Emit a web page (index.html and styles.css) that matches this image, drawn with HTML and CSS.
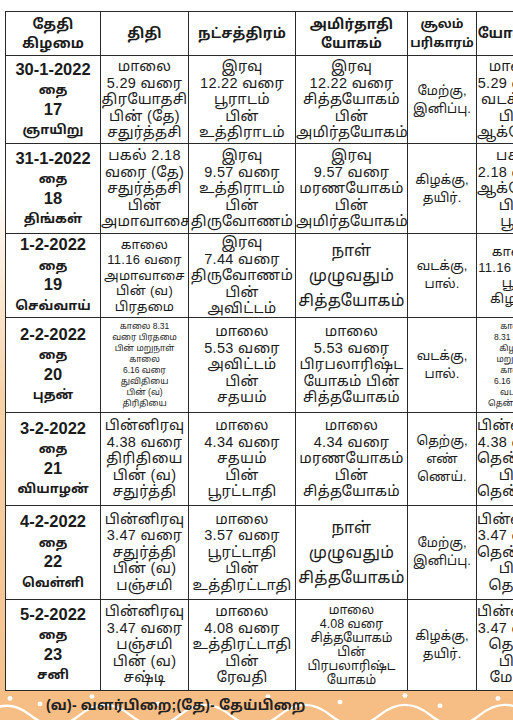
FILE: index.html
```html
<!DOCTYPE html>
<html lang="ta">
<head>
<meta charset="utf-8">
<link rel="stylesheet" href="styles.css">
</head>
<body>
<div class="page">
  <table class="cal">
    <colgroup>
      <col class="c1"><col class="c2"><col class="c3"><col class="c4"><col class="c5"><col class="c6">
    </colgroup>
    <tr class="head">
      <th>தேதி<br>கிழமை</th>
      <th>திதி</th>
      <th>நட்சத்திரம்</th>
      <th>அமிர்தாதி<br>யோகம்</th>
      <th class="narrow">சூலம்<br>பரிகாரம்</th>
      <th>யோகினி</th>
    </tr>
    <tr class="r1">
      <td class="date"><b class="big">30-1-2022</b><br>தை<br><b class="big">17</b><br>ஞாயிறு</td>
      <td>மாலை<br>5.29 வரை<br>திரயோதசி<br>பின் (தே)<br>சதுர்த்தசி</td>
      <td>இரவு<br>12.22 வரை<br>பூராடம்<br>பின்<br>உத்திராடம்</td>
      <td>இரவு<br>12.22 வரை<br>சித்தயோகம்<br>பின்<br>அமிர்தயோகம்</td>
      <td class="dir">மேற்கு,<br>இனிப்பு.</td>
      <td>மாலை<br>5.29 வரை<br>வடக்கில்<br>பின்<br>ஆக்னேயம்</td>
    </tr>
    <tr class="r2">
      <td class="date"><b class="big">31-1-2022</b><br>தை<br><b class="big">18</b><br>திங்கள்</td>
      <td>பகல் 2.18<br>வரை (தே)<br>சதுர்த்தசி<br>பின்<br>அமாவாசை</td>
      <td>இரவு<br>9.57 வரை<br>உத்திராடம்<br>பின்<br>திருவோணம்</td>
      <td>இரவு<br>9.57 வரை<br>மரணயோகம்<br>பின்<br>அமிர்தயோகம்</td>
      <td class="dir">கிழக்கு,<br>தயிர்.</td>
      <td>பகல்<br>2.18 வரை<br>ஆக்னேயம்<br>பின்<br>பூமி</td>
    </tr>
    <tr class="r3">
      <td class="date"><b class="big">1-2-2022</b><br>தை<br><b class="big">19</b><br>செவ்வாய்</td>
      <td class="sm">காலை<br>11.16 வரை<br>அமாவாசை<br>பின் (வ)<br>பிரதமை</td>
      <td>இரவு<br>7.44 வரை<br>திருவோணம்<br>பின்<br>அவிட்டம்</td>
      <td class="lg">நாள்<br>முழுவதும்<br>சித்தயோகம்</td>
      <td class="dir">வடக்கு,<br>பால்.</td>
      <td class="sm">காலை<br>11.16 வரை<br>பூமி<br>கிழக்கு</td>
    </tr>
    <tr class="r4">
      <td class="date"><b class="big">2-2-2022</b><br>தை<br><b class="big">20</b><br>புதன்</td>
      <td class="xs">காலை 8.31<br>வரை பிரதமை<br>பின் மறுநாள்<br>காலை<br>6.16 வரை<br>துவிதியை<br>பின் (வ)<br>திரிதியை</td>
      <td>மாலை<br>5.53 வரை<br>அவிட்டம்<br>பின்<br>சதயம்</td>
      <td>மாலை<br>5.53 வரை<br>பிரபலாரிஷ்ட<br>யோகம் பின்<br>சித்தயோகம்</td>
      <td class="dir">வடக்கு,<br>பால்.</td>
      <td class="xs">காலை<br>8.31 வரை<br>கிழக்கு<br>மறுநாள்<br>காலை<br>6.16 வரை<br>வடக்கு<br>தென்மேற்கு</td>
    </tr>
    <tr class="r5">
      <td class="date"><b class="big">3-2-2022</b><br>தை<br><b class="big">21</b><br>வியாழன்</td>
      <td>பின்னிரவு<br>4.38 வரை<br>திரிதியை<br>பின் (வ)<br>சதுர்த்தி</td>
      <td>மாலை<br>4.34 வரை<br>சதயம்<br>பின்<br>பூரட்டாதி</td>
      <td>மாலை<br>4.34 வரை<br>மரணயோகம்<br>பின்<br>சித்தயோகம்</td>
      <td class="dir">தெற்கு,<br>எண்<br>ணெய்.</td>
      <td>பின்னிரவு<br>4.38 வரை<br>தென்மேற்கு<br>பின்<br>தென்கிழக்கு</td>
    </tr>
    <tr class="r6">
      <td class="date"><b class="big">4-2-2022</b><br>தை<br><b class="big">22</b><br>வெள்ளி</td>
      <td>பின்னிரவு<br>3.47 வரை<br>சதுர்த்தி<br>பின் (வ)<br>பஞ்சமி</td>
      <td>மாலை<br>3.57 வரை<br>பூரட்டாதி<br>பின்<br>உத்திரட்டாதி</td>
      <td class="lg">நாள்<br>முழுவதும்<br>சித்தயோகம்</td>
      <td class="dir">மேற்கு,<br>இனிப்பு.</td>
      <td>பின்னிரவு<br>3.47 வரை<br>தென்கிழக்கு<br>பின்<br>தெற்கு</td>
    </tr>
    <tr class="r7">
      <td class="date"><b class="big">5-2-2022</b><br>தை<br><b class="big">23</b><br>சனி</td>
      <td>பின்னிரவு<br>3.47 வரை<br>பஞ்சமி<br>பின் (வ)<br>சஷ்டி</td>
      <td>மாலை<br>4.08 வரை<br>உத்திரட்டாதி<br>பின்<br>ரேவதி</td>
      <td class="s7">மாலை<br>4.08 வரை<br>சித்தயோகம்<br>பின்<br>பிரபலாரிஷ்ட<br>யோகம்</td>
      <td class="dir">கிழக்கு,<br>தயிர்.</td>
      <td>பின்னிரவு<br>3.47 வரை<br>தெற்கு<br>பின்<br>மேற்கு</td>
    </tr>
  </table>
  <div class="foot">
    <svg class="wave" viewBox="0 0 513 32" preserveAspectRatio="none">
      <path d="M-20 30 Q5 4 30 26 T80 26 T130 26 T180 26 T230 26 T280 26 T330 26 T380 26 T430 26 T480 26 T530 26" fill="none" stroke="#fff" stroke-width="2.5"/>
      <circle cx="10" cy="8" r="2.5" fill="#fff"/>
      <circle cx="40" cy="14" r="2.5" fill="#fff"/>
      <circle cx="92" cy="6" r="2.5" fill="#fff"/>
      <circle cx="158" cy="14" r="2.5" fill="#fff"/>
      <circle cx="268" cy="6" r="2.5" fill="#fff"/>
      <circle cx="340" cy="12" r="2.5" fill="#fff"/>
      <circle cx="405" cy="5" r="2.5" fill="#fff"/>
      <circle cx="440" cy="16" r="2.5" fill="#fff"/>
      <circle cx="498" cy="8" r="2.5" fill="#fff"/>
    </svg>
    <span class="legend">(வ)- வளர்பிறை;(தே)- தேய்பிறை</span>
  </div>
</div>
</body>
</html>
```
FILE: styles.css
```css
html, body {
  margin: 0;
  padding: 0;
  overflow: hidden;
  width: 513px;
  height: 720px;
}
body {
  font-family: "Liberation Sans", "Noto Sans Tamil", "Lohit Tamil", "Noto Sans", sans-serif;
  color: #1b1b1b;
  background: #fff;
}
.page {
  width: 513px;
  height: 720px;
  padding-top: 11px;
  box-sizing: border-box;
  display: flex;
  flex-direction: column;
  background: linear-gradient(to bottom, #ffffff 0%, #ffffff 25%, #f8d2a8 55%, #f5c08a 100%);
  overflow: hidden;
}
.cal {
  border-collapse: collapse;
  table-layout: fixed;
  width: 549px;
  margin-left: 5px;
  background: #fff;
  flex: none;
}
.c1 { width: 95px; }
.c2 { width: 88px; }
.c3 { width: 107px; }
.c4 { width: 112px; }
.c5 { width: 69px; }
.c6 { width: 78px; }
.cal th, .cal td {
  border: 1.5px solid #2a2a2a;
  text-align: center;
  vertical-align: middle;
  padding: 0;
  overflow: hidden;
  white-space: nowrap;
}
.cal th {
  font-size: 14px;
  font-weight: 700;
  line-height: 19px;
  letter-spacing: 0.2px;
}
.cal th.narrow { font-size: 12.5px; letter-spacing: 0; }
.cal td {
  font-size: 14.5px;
  line-height: 16.5px;
  letter-spacing: 0.3px;
}
.head { height: 44px; }
.r1 { height: 88px; }
.r2 { height: 90px; }
.r3 { height: 82px; }
.r4 { height: 95px; }
.r5 { height: 93px; }
.r6 { height: 94px; }
.r7 { height: 91px; }
.cal td.date {
  font-weight: 700;
  font-size: 13px;
  line-height: 19.5px;
  letter-spacing: 0;
}
.big { font-size: 16.5px; }
.cal td.dir { font-size: 13px; line-height: 18px; letter-spacing: 0; }
.cal td.sm { font-size: 13px; line-height: 15.5px; }
.cal td.xs { font-size: 8.5px; line-height: 11px; letter-spacing: 0; }
.cal td.lg { font-size: 16px; line-height: 25px; }
.cal td.s7 { font-size: 12.5px; line-height: 14px; letter-spacing: 0; }
.foot {
  position: relative;
  flex: 1;
  background: #f6bd85;
}
.wave {
  position: absolute;
  left: 0;
  top: 0;
  width: 100%;
  height: 100%;
}
.legend {
  position: relative;
  display: block;
  padding: 6px 0 0 46px;
  font-size: 14px;
  font-weight: 700;
  color: #222;
  letter-spacing: 0.2px;
}
```
